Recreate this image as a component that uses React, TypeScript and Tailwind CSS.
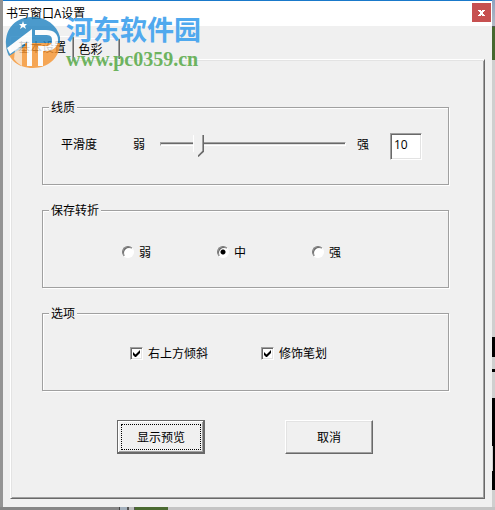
import { useState } from "react";
import type { ReactNode } from "react";
import clsx from "clsx";

interface GroupProps {
  title: string;
  children: ReactNode;
}

interface PushButtonProps {
  children: ReactNode;
  primary?: boolean;
}

const STRENGTHS = ["弱", "中", "强"];
const OPTIONS = ["右上方倾斜", "修饰笔划"];

function Group({ title, children }: GroupProps) {
  return (
    <fieldset className="h-[86px] border border-[#a0a0a0] shadow-[1px_1px_0_#fff,inset_1px_1px_0_#fff]">
      <legend className="ml-1.5 h-4 bg-[#f0f0f0] px-0.5 leading-4">{title}</legend>
      {children}
    </fieldset>
  );
}

function PushButton({ children, primary }: PushButtonProps) {
  return (
    <button
      type="button"
      className={clsx(
        "h-[34px] w-[88px] border",
        primary
          ? "border-[#696969] p-[3px] shadow-[inset_-1px_-1px_0_#696969,inset_1px_1px_0_#fff,inset_-2px_-2px_0_#a0a0a0]"
          : "border-t-white border-r-[#696969] border-b-[#696969] border-l-white shadow-[inset_-1px_-1px_0_#a0a0a0,inset_1px_1px_0_#e3e3e3]"
      )}
    >
      <span
        className={clsx(
          "flex h-full items-center justify-center",
          primary && "border border-dotted border-black"
        )}
      >
        {children}
      </span>
    </button>
  );
}

function CheckOption({ label }: { label: string }) {
  const [checked, setChecked] = useState(true);
  return (
    <label className="flex items-center gap-[5px]">
      <span className="relative size-[13px]">
        <input
          type="checkbox"
          checked={checked}
          onChange={() => setChecked(!checked)}
          className="block size-[13px] appearance-none border border-t-[#a0a0a0] border-r-white border-b-white border-l-[#a0a0a0] bg-white shadow-[inset_1px_1px_0_#696969,inset_-1px_-1px_0_#e3e3e3]"
        />
        {checked && (
          <svg viewBox="0 0 13 13" className="pointer-events-none absolute inset-0 size-full">
            <path d="M3 5v3l2 2h1l4-4V3L5.500 7.500z" fill="#000" />
          </svg>
        )}
      </span>
      {label}
    </label>
  );
}

function Watermark() {
  return (
    <div className="pointer-events-none absolute top-[15px] left-0.5 z-20 flex items-start gap-1">
      <svg viewBox="0 0 57 54" className="h-[54px] w-[57px] opacity-80">
        <path d="M1 30C0 12 12 2 28 2c13 0 24 8 27 20v6H1z" fill="#1f82c0" />
        <path d="M1 28h54c0 14-11 25-27 25S2 44 1 28z" fill="#f7942f" />
        <path d="M1 28h19v3L4 41C2 37 1 33 1 28z" fill="#1f82c0" />
        <path
          d="M2 33L27 14v37h-5V27L5 39zM30 15h11c8 0 12 4 12 10s-4 11-12 11h-3v15h-5V31h7c5 0 7-2 7-6s-2-5-7-5H30z"
          fill="#fff"
        />
        <path d="M10 35l7-5v21c-3-2-6-4-8-7z" fill="#fff" fillOpacity=".65" />
        <path d="M18 6l1 3 3 0-2 2 1 3-3-2-3 2 1-3-2-2h3z" fill="#fff" />
      </svg>
      <div className="flex flex-col">
        <span className="text-[27px] leading-7 font-bold text-[#50a9ee]">河东软件园</span>
        <span className="font-['Liberation_Serif',serif] text-xl leading-8 font-bold text-[#6db35f]">
          www.pc0359.cn
        </span>
      </div>
    </div>
  );
}

function TitleBar() {
  return (
    <header className="flex h-[26px] items-start justify-between border-t border-[#1979ca] bg-white">
      <h1 className="pl-[3px] leading-6">书写窗口A设置</h1>
      <button
        type="button"
        aria-label="关闭"
        className="mt-0.5 mr-px flex size-[19px] items-center justify-center bg-[#c75050]"
      >
        <svg viewBox="0 0 7 6" className="h-1.5 w-[7px]" fill="#fff" shapeRendering="crispEdges">
          <path d="M0 0h3v1h1V0h3v1H6v1H5v2h1v1h1v1H4V5H3v1H0V5h1V4h1V2H1V1H0z" />
        </svg>
      </button>
    </header>
  );
}

function Tabs() {
  return (
    <div role="tablist" className="flex items-end pt-2.5 pl-[7px]">
      <button
        type="button"
        role="tab"
        aria-selected="true"
        className="z-10 -mb-0.5 h-[25px] w-16 rounded-t-xs border-t border-r border-l border-t-white border-r-[#696969] border-l-white bg-[#f0f0f0] pb-1 shadow-[inset_-1px_0_0_#a0a0a0]"
      >
        基本设置
      </button>
      <button
        type="button"
        role="tab"
        aria-selected="false"
        className="h-[21px] w-[46px] rounded-t-xs border-t border-r border-t-white border-r-[#696969] pr-3 shadow-[inset_-1px_0_0_#a0a0a0]"
      >
        色彩
      </button>
    </div>
  );
}

function SmoothnessRow() {
  const [value, setValue] = useState(10);
  return (
    <div className="flex items-start pt-[18px] pr-[26px] pl-[18px] leading-[22px]">
      <label htmlFor="smooth" className="w-[72px]">
        平滑度
      </label>
      <span>弱</span>
      <input
        id="smooth"
        type="range"
        min={0}
        max={54}
        value={value}
        onChange={(e) => setValue(Number(e.target.value))}
        className="mr-[11px] ml-[15px] h-[22px] min-w-0 flex-1 appearance-none bg-transparent [&::-webkit-slider-runnable-track]:h-1 [&::-webkit-slider-runnable-track]:border [&::-webkit-slider-runnable-track]:border-t-[#a0a0a0] [&::-webkit-slider-runnable-track]:border-r-white [&::-webkit-slider-runnable-track]:border-b-white [&::-webkit-slider-runnable-track]:border-l-[#a0a0a0] [&::-webkit-slider-runnable-track]:bg-[linear-gradient(#696969_1px,#e3e3e3_1px)] [&::-webkit-slider-thumb]:mt-[-8px] [&::-webkit-slider-thumb]:h-[22px] [&::-webkit-slider-thumb]:w-[11px] [&::-webkit-slider-thumb]:appearance-none [&::-webkit-slider-thumb]:bg-[linear-gradient(135deg,#f0f0f0_30%,#696969_42%),linear-gradient(to_right,#fff_1px,#f0f0f0_1px,#f0f0f0_9px,#a0a0a0_9px,#a0a0a0_10px,#696969_10px)] [&::-webkit-slider-thumb]:[background-size:6px_6px,100%_100%] [&::-webkit-slider-thumb]:bg-[position:right_bottom,left_top] [&::-webkit-slider-thumb]:bg-no-repeat [&::-webkit-slider-thumb]:[clip-path:polygon(0_0,100%_0,100%_75%,50%_100%,0_75%)]"
      />
      <span>强</span>
      <input
        type="text"
        aria-label="平滑度"
        value={value}
        onChange={(e) => setValue(Number(e.target.value) || 0)}
        className="ml-[21px] h-[27px] w-8 border border-t-[#a0a0a0] border-r-white border-b-white border-l-[#a0a0a0] bg-white pb-1 pl-[3px] font-['Open_Sans','Noto_Sans',sans-serif] leading-[22px] shadow-[inset_1px_1px_0_#696969,inset_-1px_-1px_0_#e3e3e3]"
      />
    </div>
  );
}

function StrengthRow() {
  const [strength, setStrength] = useState("中");
  return (
    <div className="flex gap-[66px] pt-[26px] pl-[79px]">
      {STRENGTHS.map((item) => (
        <label key={item} className="flex items-center gap-[5px]">
          <input
            type="radio"
            name="strength"
            checked={strength === item}
            onChange={() => setStrength(item)}
            className="size-3 appearance-none rounded-full border border-t-[#777] border-r-white border-b-white border-l-[#777] bg-white shadow-[inset_1px_1px_0_#696969] checked:bg-[radial-gradient(circle,#000_2px,transparent_3px)]"
          />
          {item}
        </label>
      ))}
    </div>
  );
}

// strip of the desktop that shows beside the window
function DesktopEdge() {
  return (
    <div className="flex w-[3px] flex-col bg-[#cfcfcf]">
      <div className="h-[26px] bg-linear-to-b from-[#8fa3c0] to-[#b3bac4]" />
      <div className="h-px bg-[#555]" />
      <div className="h-[33px] bg-[#47682f]" />
      <div className="mt-[277px] h-5 bg-black" />
      <div className="mt-3 h-[3px] bg-black" />
      <div className="mt-[26px] h-[48px] bg-black" />
      <div className="ml-px h-[25px] bg-black" />
      <div className="h-[19px] bg-black" />
    </div>
  );
}

export default function App() {
  return (
    <div className="bg-[#cfcfcf] font-['Noto_Sans_CJK_SC',sans-serif] text-xs leading-4 text-black">
      <div className="flex">
        <div className="w-[3px] bg-[#949494]" />
        <main className="relative min-w-0 flex-1 bg-[#f0f0f0] pb-2">
          <TitleBar />
          <Tabs />
          <div className="mx-[7px] flex flex-col gap-[17px] border border-t-white border-r-[#696969] border-b-[#696969] border-l-white pt-[39px] pr-[35px] pb-11 pl-[31px] shadow-[inset_1px_1px_0_#e3e3e3,inset_-1px_-1px_0_#a0a0a0]">
            <Group title="线质">
              <SmoothnessRow />
            </Group>
            <Group title="保存转折">
              <StrengthRow />
            </Group>
            <Group title="选项">
              <div className="flex gap-[53px] pt-6 pl-[87px]">
                {OPTIONS.map((option) => (
                  <CheckOption key={option} label={option} />
                ))}
              </div>
            </Group>
            <div className="flex gap-20 pt-3 pl-[75px]">
              <PushButton primary>显示预览</PushButton>
              <PushButton>取消</PushButton>
            </div>
          </div>
          <Watermark />
        </main>
        <DesktopEdge />
      </div>
      <div className="flex h-[3px]">
        <div className="w-[119px] bg-[#868686]" />
        <div className="w-px bg-[#444]" />
        <div className="w-[7px] bg-[#a3afbb]" />
        <div className="w-0.5 bg-[#555]" />
        <div className="w-[5px] bg-[#bcbcbc]" />
        <div className="w-px bg-[#555]" />
        <div className="w-[33px] bg-[#4b6a31]" />
        <div className="flex-1 bg-[#c4c4c4]" />
      </div>
    </div>
  );
}
